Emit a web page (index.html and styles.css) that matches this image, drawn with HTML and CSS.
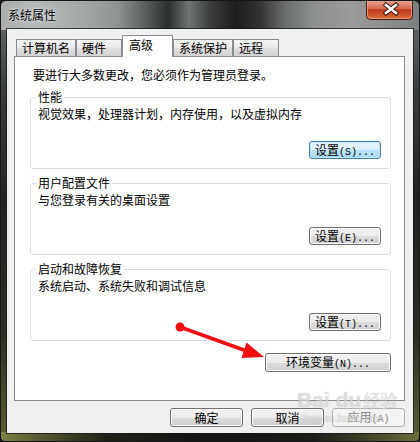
FILE: index.html
```html
<!DOCTYPE html>
<html lang="zh-CN">
<head>
<meta charset="utf-8">
<title>系统属性</title>
<link rel="stylesheet" href="styles.css">
</head>
<body>
<div class="window">
  <div class="titlebar">
    <span class="title">系统属性</span>
    <div class="close">
      <svg width="47" height="20" viewBox="0 0 47 20">
        <defs>
          <linearGradient id="cg" x1="0" y1="0" x2="0" y2="1">
            <stop offset="0" stop-color="#e9a898"/>
            <stop offset="0.45" stop-color="#d4674e"/>
            <stop offset="0.5" stop-color="#c2391c"/>
            <stop offset="1" stop-color="#d8703e"/>
          </linearGradient>
        </defs>
        <path d="M0.5 0 V15.5 Q0.5 19.5 4.5 19.5 H42.5 Q46.5 19.5 46.5 15.5 V0" fill="url(#cg)" stroke="#4a1a12" stroke-width="1"/>
        <path d="M1.5 0 V15 Q1.5 18.5 5 18.5 H42 Q45.5 18.5 45.5 15 V0" fill="none" stroke="#f3b9a8" stroke-opacity="0.6" stroke-width="1"/>
        <path d="M20 5 L30 13 M30 5 L20 13" stroke="#3b1610" stroke-width="4.6" stroke-linecap="square"/>
        <path d="M20 5 L30 13 M30 5 L20 13" stroke="#ffffff" stroke-width="2.6" stroke-linecap="square"/>
      </svg>
    </div>
  </div>
  <div class="client">
    <div class="tabs">
      <div class="tab">计算机名</div>
      <div class="tab">硬件</div>
      <div class="tab active">高级</div>
      <div class="tab">系统保护</div>
      <div class="tab">远程</div>
    </div>
    <div class="panel">
      <p class="intro">要进行大多数更改，您必须作为管理员登录。</p>
      <fieldset class="group">
        <legend>性能</legend>
        <p class="desc">视觉效果，处理器计划，内存使用，以及虚拟内存</p>
        <div class="row"><button class="btn small focus">设置<span class="mono">(S)...</span></button></div>
      </fieldset>
      <fieldset class="group">
        <legend>用户配置文件</legend>
        <p class="desc">与您登录有关的桌面设置</p>
        <div class="row"><button class="btn small">设置<span class="mono">(E)...</span></button></div>
      </fieldset>
      <fieldset class="group">
        <legend>启动和故障恢复</legend>
        <p class="desc">系统启动、系统失败和调试信息</p>
        <div class="row"><button class="btn small">设置<span class="mono">(T)...</span></button></div>
      </fieldset>
      <div class="row env"><button class="btn wide">环境变量<span class="mono">(N)...</span></button></div>
    </div>
    <div class="footer">
      <button class="btn">确定</button>
      <button class="btn">取消</button>
      <button class="btn" disabled>应用<span class="mono">(A)</span></button>
    </div>
  </div>
  <svg class="arrow" width="420" height="442" viewBox="0 0 420 442">
    <circle cx="180" cy="327" r="4.5" fill="#f01010"/>
    <line x1="180" y1="327" x2="248" y2="351.5" stroke="#f01010" stroke-width="3.5"/>
    <polygon points="264,357 246.5,342.5 241.5,358" fill="#f01010"/>
  </svg>
  <div class="watermark">
    <div class="wm-logo"><span class="wm-bai">Bai</span><span class="wm-du">du</span><span class="wm-jy">经验</span></div>
    <div class="wm-url">jingyan.baidu.com</div>
  </div>
</div>
</body>
</html>
```

FILE: styles.css
```css
html, body {
  margin: 0;
  padding: 0;
  background: #1a1a1a;
}

body {
  font-family: "Noto Sans CJK SC", "Liberation Sans", sans-serif;
  font-size: 12px;
  color: #000;
}

.window {
  position: relative;
  width: 420px;
  height: 442px;
  box-sizing: border-box;
  border: 1px solid #161818;
  border-radius: 6px 6px 5px 5px;
  padding: 0 6px 8px 6px;
  display: flex;
  flex-direction: column;
  overflow: hidden;
  background:
    linear-gradient(to right,
      #a9adad 0%, #b6baba 8%, #a3a7a7 20%, #8e9292 28%, #5e6262 34%,
      #2c2f2f 40%, #6f7373 45%, #3b3e3e 50%, #1c1e1e 56%, #323434 62%,
      #6b6e6e 68%, #8d9090 75%, #9a9c9c 84%, #7d8080 100%) top / 100% 29px no-repeat,
    linear-gradient(to right,
      #7f8244 0%, #5b5c34 8%, #202219 25%, #111212 50%, #1c1d18 75%, #4f5030 92%, #6d6e3c 100%) bottom / 100% 9px no-repeat,
    linear-gradient(to bottom,
      #6e7272 0%, #3b3e3e 20%, #202222 45%, #2a2c24 75%, #5d5f34 100%);
}

.titlebar {
  height: 28px;
  flex: none;
  display: flex;
  justify-content: space-between;
  align-items: flex-start;
}

.title {
  margin-top: 8px;
  padding-left: 1px;
  line-height: 12px;
  font-size: 12px;
  color: #000;
  text-shadow: 0 0 4px rgba(255, 255, 255, 0.7), 0 0 2px rgba(255, 255, 255, 0.6);
}

.close {
  width: 47px;
  height: 20px;
  margin-top: -1px;
}

.close svg {
  display: block;
}

.client {
  flex: 1;
  background: #f0f0f0;
  padding: 6px 8px 6px 7px;
  box-sizing: border-box;
  box-shadow: 0 0 0 1px rgba(20, 22, 22, 0.75);
  display: flex;
  flex-direction: column;
}

.tabs {
  display: flex;
  align-items: flex-end;
  height: 21px;
  margin-left: 2px;
}

.tab {
  box-sizing: border-box;
  height: 17px;
  min-width: 46px;
  padding: 0 5px;
  border: 1px solid #898c95;
  border-bottom: 0;
  line-height: 16px;
  white-space: nowrap;
  background: linear-gradient(to bottom, #f5f5f5 0%, #ebebeb 45%, #dedede 55%, #d3d3d3 100%);
  border-radius: 1px 1px 0 0;
}

.tab.active {
  position: relative;
  z-index: 1;
  height: 22px;
  min-width: 51px;
  padding-left: 6px;
  line-height: 18px;
  margin-bottom: -1px;
  background: #fff;
}

.panel {
  height: 345px;
  box-sizing: border-box;
  border: 1px solid #898c95;
  background: #fff;
  padding: 10px 13px 0 15px;
}

.intro {
  margin: 0;
  padding-left: 3px;
  line-height: 16px;
}

.group {
  margin: 7px 0 0 0;
  padding: 0 9px 9px 7px;
  border: 1px solid #d5dfe5;
  border-radius: 3px;
  min-inline-size: auto;
}

.group legend {
  padding: 0 2px;
  margin-left: -2px;
  line-height: 14px;
}

.desc {
  margin: 2px 0 0 0;
  line-height: 16px;
}

.row {
  display: flex;
  justify-content: flex-end;
  margin-top: 19px;
}

.row.env {
  margin-top: 12px;
}

.btn {
  font: inherit;
  font-size: 12px;
  color: #000;
  box-sizing: border-box;
  width: 73px;
  height: 19px;
  padding: 0;
  line-height: 16px;
  border: 1px solid #707070;
  border-radius: 3px;
  background: linear-gradient(to bottom, #f2f2f2 0%, #ebebeb 50%, #dddddd 50%, #cfcfcf 100%);
  box-shadow: inset 0 0 0 1px #fcfcfc;
  white-space: nowrap;
}

.btn.small {
  width: 72px;
  height: 18px;
  line-height: 15px;
}

.btn.wide {
  width: 126px;
}

.btn.focus {
  border-color: #3c7fb1;
  background: linear-gradient(to bottom, #eaf6fd 0%, #d9f0fc 50%, #bee6fd 50%, #a7d9f5 100%);
  box-shadow: inset 0 0 0 1px #c4e5f6;
}

.btn:disabled {
  border-color: #adb2b5;
  background: #f4f4f4;
  box-shadow: none;
  color: #838383;
}

.mono {
  font-family: "Liberation Mono", "DejaVu Sans Mono", monospace;
  font-size: 10px;
}

.footer {
  display: flex;
  justify-content: flex-end;
  gap: 8px;
  margin-top: 7px;
}

.arrow {
  position: absolute;
  left: -1px;
  top: -1px;
  pointer-events: none;
}

.watermark {
  position: absolute;
  left: 296px;
  top: 386px;
  width: 110px;
  pointer-events: none;
  color: rgba(255, 255, 255, 0.55);
  text-shadow: 0 0 1px rgba(90, 90, 90, 0.45);
  font-family: "Liberation Sans", "Noto Sans CJK SC", sans-serif;
}

.wm-logo {
  display: flex;
  align-items: baseline;
  line-height: 26px;
}

.wm-bai,
.wm-du {
  font-size: 21px;
  font-weight: bold;
}

.wm-du {
  margin-left: 6px;
}

.wm-jy {
  font-family: "Noto Sans CJK SC", sans-serif;
  font-size: 17px;
  margin-left: 2px;
}

.wm-url {
  font-size: 10px;
  line-height: 12px;
  margin-left: 6px;
}
```
